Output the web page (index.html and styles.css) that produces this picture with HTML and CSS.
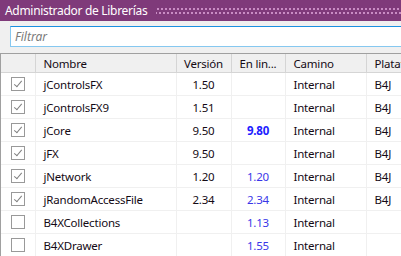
FILE: index.html
```html
<!DOCTYPE html>
<html lang="es">
<head>
  <meta charset="UTF-8" />
  <title>Administrador de Librerías</title>
  <link rel="stylesheet" href="styles.css">
</head>
<body>

  <!-- Title bar -->
  <div class="titlebar">
    <span class="title">Administrador de Librerías</span>
    <span class="grip"></span>
  </div>

  <!-- Filter -->
  <div class="filter-row">
    <input type="text" class="filter" placeholder="Filtrar" />
  </div>

  <!-- Library list -->
  <div class="grid-wrap">
    <table class="libs">
      <colgroup>
        <col class="c-check">
        <col class="c-name">
        <col class="c-ver">
        <col class="c-online">
        <col class="c-path">
        <col class="c-plat">
      </colgroup>
      <thead>
        <tr>
          <th></th>
          <th>Nombre</th>
          <th class="center">Versión</th>
          <th>En lin...</th>
          <th>Camino</th>
          <th>Plataf</th>
        </tr>
      </thead>
      <tbody>
        <tr>
          <td><span class="box checked"></span></td>
          <td>jControlsFX</td>
          <td class="center">1.50</td>
          <td class="center online"></td>
          <td>Internal</td>
          <td>B4J</td>
        </tr>
        <tr>
          <td><span class="box checked"></span></td>
          <td>jControlsFX9</td>
          <td class="center">1.51</td>
          <td class="center online"></td>
          <td>Internal</td>
          <td>B4J</td>
        </tr>
        <tr>
          <td><span class="box checked"></span></td>
          <td>jCore</td>
          <td class="center">9.50</td>
          <td class="center online newer">9.80</td>
          <td>Internal</td>
          <td>B4J</td>
        </tr>
        <tr>
          <td><span class="box checked"></span></td>
          <td>jFX</td>
          <td class="center">9.50</td>
          <td class="center online"></td>
          <td>Internal</td>
          <td>B4J</td>
        </tr>
        <tr>
          <td><span class="box checked"></span></td>
          <td>jNetwork</td>
          <td class="center">1.20</td>
          <td class="center online">1.20</td>
          <td>Internal</td>
          <td>B4J</td>
        </tr>
        <tr>
          <td><span class="box checked"></span></td>
          <td>jRandomAccessFile</td>
          <td class="center">2.34</td>
          <td class="center online">2.34</td>
          <td>Internal</td>
          <td>B4J</td>
        </tr>
        <tr>
          <td><span class="box"></span></td>
          <td>B4XCollections</td>
          <td class="center"></td>
          <td class="center online">1.13</td>
          <td>Internal</td>
          <td></td>
        </tr>
        <tr>
          <td><span class="box"></span></td>
          <td>B4XDrawer</td>
          <td class="center"></td>
          <td class="center online">1.55</td>
          <td>Internal</td>
          <td></td>
        </tr>
      </tbody>
    </table>
  </div>

</body>
</html>
```

FILE: styles.css
```css
body {
  margin: 0;
  padding: 0;
  width: 401px;
  height: 256px;
  overflow: hidden;
  background: #f0f0f0;
  font-family: 'Noto Sans', 'Open Sans', sans-serif;
  font-size: 11.5px;
  letter-spacing: -0.2px;
  color: #140a14;
}

.titlebar {
  height: 21px;
  background: #7f3a7a;
  display: flex;
  align-items: center;
  padding-left: 5px;
}

.title {
  color: #ffffff;
  font-size: 12px;
  letter-spacing: -0.3px;
  white-space: nowrap;
}

.grip {
  flex: 1;
  height: 7px;
  margin-left: 9px;
  margin-top: 1px;
  background-image:
    radial-gradient(circle, #c98dc4 0.8px, transparent 1px),
    radial-gradient(circle, #c98dc4 0.8px, transparent 1px);
  background-size: 4px 4px, 4px 4px;
  background-position: 0 -1px, 2px 3px;
  background-repeat: repeat-x;
}

.filter-row {
  padding: 5px 0 0 10px;
  height: 21px;
}

.filter {
  box-sizing: border-box;
  width: 400px;
  height: 21px;
  margin: 0;
  padding: 0 4px;
  border: 1px solid #86c8f0;
  border-top-color: #1a8fe0;
  border-right: none;
  background: #fff;
  font-family: inherit;
  font-size: 12px;
  outline: none;
}

.filter::placeholder {
  color: #7a7a7a;
  font-style: italic;
}

.grid-wrap {
  margin-top: 6px;
  border-top: 1px solid #a0a0a0;
  border-left: 1px solid #a0a0a0;
  background: #fff;
  height: 210px;
  overflow: hidden;
}

.libs {
  border-collapse: collapse;
  table-layout: fixed;
  width: 401px;
}

.c-check { width: 34px; }
.c-name { width: 141px; }
.c-ver { width: 55px; }
.c-online { width: 54px; }
.c-path { width: 81px; }
.c-plat { width: 36px; }

.libs th {
  height: 18px;
  padding: 0 0 0 8px;
  background: #f0f0f0;
  font-weight: normal;
  text-align: left;
  white-space: nowrap;
  overflow: hidden;
  border-right: 1px solid #d5d5d5;
  border-bottom: 1px solid #d5d5d5;
}

.libs th:last-child {
  border-right: none;
}

.libs td {
  height: 22px;
  padding: 0 0 0 8px;
  white-space: nowrap;
  overflow: hidden;
  border-right: 1px solid #f0f0f0;
  border-bottom: 1px solid #f0f0f0;
}

.libs th.center,
.libs td.center {
  text-align: center;
  padding: 0;
}

.libs td:first-child {
  padding: 0 0 0 10px;
}

.online {
  color: #3a36e8;
}

.online.newer {
  color: #2020ff;
  font-weight: bold;
}

.box {
  display: block;
  box-sizing: border-box;
  width: 14px;
  height: 14px;
  border: 1px solid #999999;
  background: #fff;
  position: relative;
}

.box.checked::after {
  content: "";
  position: absolute;
  left: 3.5px;
  top: 1px;
  width: 3px;
  height: 7px;
  border-right: 1.5px solid #7f7f7f;
  border-bottom: 1.5px solid #7f7f7f;
  transform: rotate(40deg);
}
```
